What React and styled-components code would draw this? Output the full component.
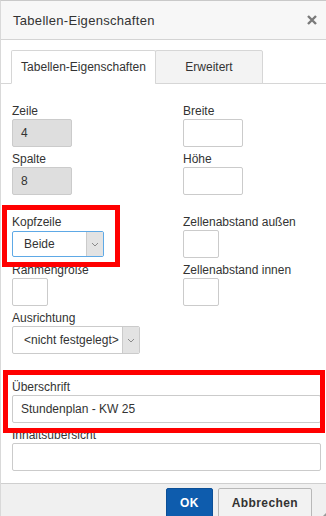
import React from 'react';
import styled, { createGlobalStyle } from 'styled-components';

const GlobalStyle = createGlobalStyle`
  html, body {
    margin: 0;
    padding: 0;
    background: #fff;
    overflow: hidden;
  }
  body {
    font-family: "Liberation Sans", Arial, sans-serif;
    color: #333;
  }
`;

const Dialog = styled.div`
  width: 326px;
  height: 516px;
  box-sizing: border-box;
  border-top: 1px solid #c9c9c9;
  border-left: 1px solid #d9d9d9;
  background: #fff;
  display: flex;
  flex-direction: column;
  overflow: hidden;
  position: relative;
`;

const Header = styled.div`
  height: 39px;
  box-sizing: border-box;
  background: #f7f7f7;
  border-bottom: 1px solid #d4d4d4;
  display: flex;
  align-items: center;
  justify-content: space-between;
  padding: 0 9px 0 12px;
  flex-shrink: 0;
`;

const Title = styled.div`
  font-size: 13px;
  letter-spacing: 0.3px;
  color: #333;
`;

const Close = styled.svg`
  width: 10px;
  height: 10px;
  display: block;
`;

const TabBar = styled.div`
  display: flex;
  padding: 10px 0 0 10px;
  border-bottom: 1px solid #d6d6d6;
  flex-shrink: 0;
`;

const Tab = styled.div`
  height: 34px;
  box-sizing: border-box;
  width: ${p => p.$w}px;
  margin-bottom: -1px;
  margin-left: ${p => (p.$active ? 0 : -1)}px;
  border: 1px solid #d6d6d6;
  border-bottom: ${p => (p.$active ? '1px solid #fff' : '1px solid #d6d6d6')};
  border-radius: 2px 2px 0 0;
  background: ${p => (p.$active ? '#fff' : '#f3f3f3')};
  display: flex;
  align-items: center;
  justify-content: center;
  font-size: 12px;
  color: #333;
`;

const Content = styled.div`
  padding: 15px 5px 0 11px;
  display: flex;
  flex-direction: column;
  flex: 1;
`;

const Grid = styled.div`
  display: grid;
  grid-template-columns: 171px 1fr;
  margin-bottom: ${p => p.$after}px;
`;

const Stack = styled.div`
  display: flex;
  flex-direction: column;
`;

const Field = styled.div`
  display: flex;
  flex-direction: column;
  align-items: flex-start;
  position: relative;
`;

const Label = styled.label`
  height: 20px;
  box-sizing: border-box;
  padding-top: 4px;
  line-height: 16px;
  font-size: 12px;
  color: #333;
  white-space: nowrap;
`;

const Input = styled.div`
  width: ${p => (p.$w ? `${p.$w}px` : '100%')};
  height: 28px;
  box-sizing: border-box;
  border: 1px solid #cbcbcb;
  border-radius: 2px;
  background: ${p => (p.$disabled ? '#dedede' : '#fff')};
  font-size: 12px;
  line-height: 26px;
  padding-left: 8px;
  color: #333;
`;

const Select = styled.div`
  width: ${p => p.$w}px;
  height: ${p => p.$h}px;
  margin: ${p => (28 - p.$h) / 2}px 0;
  box-sizing: border-box;
  border: 1px solid ${p => (p.$focus ? '#5ea9e6' : '#cbcbcb')};
  border-radius: 2px;
  display: flex;
  font-size: 12px;
  color: #333;
  background: #fff;
  overflow: hidden;
`;

const SelectText = styled.div`
  flex: 1;
  padding-left: ${p => p.$pad}px;
  display: flex;
  align-items: center;
  white-space: nowrap;
`;

const Arrow = styled.div`
  width: 16px;
  border-left: 1px solid #cbcbcb;
  background: #e3e3e3;
  display: flex;
  align-items: center;
  justify-content: center;
`;

/* red annotation frame drawn over the form */
const Mark = styled.div`
  position: absolute;
  top: ${p => p.$t}px;
  left: ${p => p.$l}px;
  width: ${p => p.$w}px;
  height: ${p => p.$h}px;
  box-sizing: border-box;
  border: 5px solid #ff0000;
  pointer-events: none;
  z-index: 2;
`;

const Footer = styled.div`
  margin-top: 12px;
  height: 40px;
  flex-shrink: 0;
  box-sizing: border-box;
  border-top: 1px solid #cfcfcf;
  background: #f0f0f0;
  display: flex;
  justify-content: flex-end;
  align-items: flex-start;
  gap: 5px;
  padding: 4px 14px 0 0;
  position: relative;
`;

const Button = styled.div`
  height: 30px;
  box-sizing: border-box;
  padding: 0 13px;
  min-width: ${p => (p.$primary ? 46 : 93)}px;
  border: 1px solid ${p => (p.$primary ? '#0b4f97' : '#b8b8b8')};
  border-radius: 2px;
  background: ${p => (p.$primary ? '#0e5cad' : '#f2f2f2')};
  color: ${p => (p.$primary ? '#fff' : '#333')};
  font-size: 12px;
  font-weight: bold;
  letter-spacing: 0.4px;
  display: flex;
  align-items: center;
  justify-content: center;
`;

const Grip = styled.div`
  position: absolute;
  right: 0;
  bottom: 0;
  width: 0;
  height: 0;
  border-left: 10px solid transparent;
  border-bottom: 10px solid #9a9a9a;
`;

const Chevron = () => (
  <svg width="8" height="5" viewBox="0 0 8 5">
    <polyline points="1,1 4,4 7,1" fill="none" stroke="#8a8a8a" strokeWidth="1" />
  </svg>
);

export default function App() {
  return (
    <>
      <GlobalStyle />
      <Dialog>
        <Header>
          <Title>Tabellen-Eigenschaften</Title>
          <Close viewBox="0 0 10 10">
            <path d="M1 1 L9 9 M9 1 L1 9" stroke="#7a7a7a" strokeWidth="2.4" />
          </Close>
        </Header>

        <TabBar>
          <Tab $active $w={145}>Tabellen-Eigenschaften</Tab>
          <Tab $w={108}>Erweitert</Tab>
        </TabBar>

        <Content>
          <Grid $after={15}>
            <Stack>
              <Field>
                <Label>Zeile</Label>
                <Input $w={60} $disabled>4</Input>
              </Field>
              <Field>
                <Label>Spalte</Label>
                <Input $w={60} $disabled>8</Input>
              </Field>
            </Stack>
            <Stack>
              <Field>
                <Label>Breite</Label>
                <Input $w={60} />
              </Field>
              <Field>
                <Label>Höhe</Label>
                <Input $w={60} />
              </Field>
            </Stack>
          </Grid>

          <Grid $after={21}>
            <Stack>
              <Field>
                <Label>Kopfzeile</Label>
                <Select $w={92} $h={26} $focus>
                  <SelectText $pad={11}>Beide</SelectText>
                  <Arrow><Chevron /></Arrow>
                </Select>
                <Mark $t={-5} $l={-10} $w={118} $h={62} />
              </Field>
              <Field>
                <Label>Rahmengröße</Label>
                <Input $w={36} />
              </Field>
              <Field>
                <Label>Ausrichtung</Label>
                <Select $w={128} $h={28}>
                  <SelectText $pad={11}>&lt;nicht festgelegt&gt;</SelectText>
                  <Arrow><Chevron /></Arrow>
                </Select>
              </Field>
            </Stack>
            <Stack>
              <Field>
                <Label>Zellenabstand außen</Label>
                <Input $w={36} />
              </Field>
              <Field>
                <Label>Zellenabstand innen</Label>
                <Input $w={36} />
              </Field>
            </Stack>
          </Grid>

          <Stack>
            <Field>
              <Label>Überschrift</Label>
              <Input>Stundenplan - KW 25</Input>
              <Mark $t={-5} $l={-9} $w={322} $h={63} />
            </Field>
            <Field>
              <Label>Inhaltsübersicht</Label>
              <Input />
            </Field>
          </Stack>
        </Content>

        <Footer>
          <Button $primary>OK</Button>
          <Button>Abbrechen</Button>
          <Grip />
        </Footer>
      </Dialog>
    </>
  );
}
